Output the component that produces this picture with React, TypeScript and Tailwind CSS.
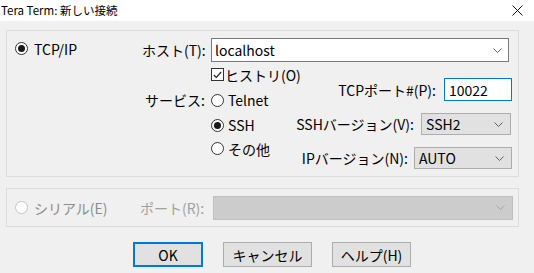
import React from "react";

const font = { fontFamily: '"Noto Sans CJK JP", "Noto Sans", sans-serif' };

function Radio({ checked = false, disabled = false }: { checked?: boolean; disabled?: boolean }) {
  return (
    <span
      className={`flex h-[13px] w-[13px] shrink-0 items-center justify-center rounded-full border bg-white ${
        disabled ? "border-[#c4c4c4]" : "border-[#333333]"
      }`}
    >
      {checked && <span className="h-[7px] w-[7px] rounded-full bg-[#1a1a1a]" />}
    </span>
  );
}

function Chevron({ color = "#606060" }: { color?: string }) {
  return (
    <svg width="9" height="5" viewBox="0 0 9 5" className="shrink-0">
      <path d="M0.5 0.5 L4.5 4.5 L8.5 0.5" fill="none" stroke={color} strokeWidth="1" />
    </svg>
  );
}

function Select({ value, className }: { value: string; className: string }) {
  return (
    <div
      className={`flex shrink-0 items-center justify-between border border-[#adadad] bg-[#e1e1e1] pl-[4px] pr-[7px] ${className}`}
    >
      <span>{value}</span>
      <Chevron />
    </div>
  );
}

export default function App() {
  return (
    <div
      className="h-[273px] w-[534px] overflow-hidden bg-[#f0f0f0] text-[14px] leading-none text-black"
      style={font}
    >
      {/* Title bar */}
      <div className="flex h-[21px] items-center justify-between bg-white pl-[1px] pr-[11px] text-[11.5px]">
        <span>Tera Term: 新しい接続</span>
        <svg width="11" height="11" viewBox="0 0 11 11">
          <path d="M0.5 0.5 L10.5 10.5 M10.5 0.5 L0.5 10.5" stroke="#111" strokeWidth="1" />
        </svg>
      </div>

      {/* TCP/IP group */}
      <div className="ml-[6px] mt-[9px] flex h-[147px] w-[513px] border border-[#dcdcdc]">
        <div className="flex w-[135px] shrink-0 items-start pl-[8px] pt-[11px]">
          <div className="flex h-[13px] items-center gap-[6px]">
            <Radio checked />
            <span>TCP/IP</span>
          </div>
        </div>

        <div className="flex flex-1 flex-col pt-[7px]">
          {/* Host */}
          <div className="flex h-[24px] items-center">
            <span className="w-[63px] whitespace-nowrap text-right">ホスト(T):</span>
            <div className="ml-[6px] flex h-[24px] w-[298px] items-center justify-between border border-[#7a7a7a] bg-white pl-[3px] pr-[6px]">
              <span>localhost</span>
              <Chevron />
            </div>
          </div>

          <div className="flex">
            {/* Left: history + service */}
            <div className="flex w-[120px] shrink-0 flex-col">
              <div className="flex h-[25px] items-center pl-[69px]">
                <span className="flex h-[13px] w-[13px] shrink-0 items-center justify-center border border-[#333333] bg-white">
                  <svg width="9" height="8" viewBox="0 0 9 8">
                    <path d="M0.8 4 L3.3 6.5 L8.2 1" fill="none" stroke="#222" strokeWidth="1.2" />
                  </svg>
                </span>
                <span className="ml-[1px] whitespace-nowrap">ヒストリ(O)</span>
              </div>
              <div className="flex h-[26px] items-center">
                <span className="w-[63px] shrink-0 whitespace-nowrap text-right">サービス:</span>
                <div className="ml-[6px] flex items-center gap-[4px]">
                  <Radio />
                  <span>Telnet</span>
                </div>
              </div>
              <div className="flex h-[24px] items-center pl-[69px]">
                <div className="flex items-center gap-[4px]">
                  <Radio checked />
                  <span>SSH</span>
                </div>
              </div>
              <div className="flex h-[23px] items-center pl-[69px]">
                <div className="flex items-center gap-[4px]">
                  <Radio />
                  <span className="whitespace-nowrap">その他</span>
                </div>
              </div>
            </div>

            {/* Right: port + versions */}
            <div className="ml-auto mr-[6px] flex shrink-0 flex-col items-end pt-[16px]">
              <div className="flex items-center">
                <span className="whitespace-nowrap">TCPポート#(P):</span>
                <div className="ml-[8px] flex h-[23px] w-[68px] shrink-0 items-center border border-[#0078d7] bg-white pl-[4px]">
                  10022
                </div>
              </div>
              <div className="mr-[1px] mt-[12px] flex items-center">
                <span className="whitespace-nowrap">SSHバージョン(V):</span>
                <Select value="SSH2" className="ml-[7px] h-[22px] w-[90px]" />
              </div>
              <div className="mt-[12px] flex items-center">
                <span className="whitespace-nowrap">IPバージョン(N):</span>
                <Select value="AUTO" className="ml-[6px] h-[22px] w-[98px]" />
              </div>
            </div>
          </div>
        </div>
      </div>

      {/* Serial group */}
      <div className="ml-[6px] mt-[11px] flex h-[39px] w-[513px] items-center border border-[#dcdcdc] text-[#8c8c8c]">
        <div className="flex w-[133px] shrink-0 items-center gap-[6px] pl-[8px]">
          <Radio disabled />
          <span className="whitespace-nowrap">シリアル(E)</span>
        </div>
        <span className="w-[63px] whitespace-nowrap text-right text-[#a0a0a0]">ポート(R):</span>
        <div className="ml-[10px] flex h-[24px] w-[300px] items-center justify-end border border-[#bfbfbf] bg-[#cccccc] pr-[7px]">
          <Chevron color="#a8a8a8" />
        </div>
      </div>

      {/* Buttons */}
      <div className="ml-[133px] mt-[15px] flex gap-[20px]">
        <button className="flex h-[25px] w-[70px] items-center justify-center border-2 border-[#0078d7] bg-[#e1e1e1]">
          OK
        </button>
        <button className="flex h-[25px] w-[89px] items-center justify-center border border-[#adadad] bg-[#e1e1e1]">
          キャンセル
        </button>
        <button className="flex h-[25px] w-[79px] items-center justify-center border border-[#adadad] bg-[#e1e1e1]">
          ヘルプ(H)
        </button>
      </div>
    </div>
  );
}
